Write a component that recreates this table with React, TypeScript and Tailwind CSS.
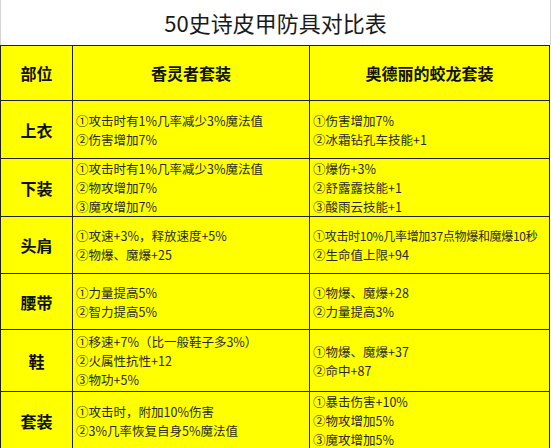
const ROWS = [
  {
    part: "上衣",
    h: "h-[58px]",
    a: ["①攻击时有1%几率减少3%魔法值", "②伤害增加7%"],
    b: ["①伤害增加7%", "②冰霜钻孔车技能+1"],
  },
  {
    part: "下装",
    h: "h-[58px]",
    a: ["①攻击时有1%几率减少3%魔法值", "②物攻增加7%", "③魔攻增加7%"],
    b: ["①爆伤+3%", "②舒露露技能+1", "③酸雨云技能+1"],
  },
  {
    part: "头肩",
    h: "h-[57px]",
    a: ["①攻速+3%，释放速度+5%", "②物爆、魔爆+25"],
    b: ["①攻击时10%几率增加37点物爆和魔爆10秒", "②生命值上限+94"],
  },
  {
    part: "腰带",
    h: "h-[56px]",
    a: ["①力量提高5%", "②智力提高5%"],
    b: ["①物爆、魔爆+28", "②力量提高3%"],
  },
  {
    part: "鞋",
    h: "h-[62px]",
    a: ["①移速+7%（比一般鞋子多3%）", "②火属性抗性+12", "③物功+5%"],
    b: ["①物爆、魔爆+37", "②命中+87"],
  },
  {
    part: "套装",
    h: "h-[58px]",
    a: ["①攻击时，附加10%伤害", "②3%几率恢复自身5%魔法值"],
    b: ["①暴击伤害+10%", "②物攻增加5%", "③魔攻增加5%"],
  },
];

function Lines({ items }: { items: string[] }) {
  return (
    <div className="flex flex-col">
      {items.map((t, i) => (
        <span
          key={i}
          className={
            t.length > 20
              ? "leading-[19px] whitespace-nowrap text-[12px] tracking-[-0.3px]"
              : "leading-[19px] whitespace-nowrap"
          }
        >
          {t}
        </span>
      ))}
    </div>
  );
}

export default function App() {
  return (
    <div className="w-[551px] h-[448px] overflow-hidden bg-white font-['Noto_Sans_CJK_SC','Noto_Sans',sans-serif]">
      <div className="h-[45px] border-x border-[#d4d4d4] flex items-center justify-center text-[22px] text-[#1a1a1a]">
        50史诗皮甲防具对比表
      </div>
      <table className="w-[549px] table-fixed border-collapse bg-[#ffff00] text-[12.5px] text-[#2a2a2a]">
        <colgroup>
          <col className="w-[72px]" />
          <col className="w-[237px]" />
          <col className="w-[240px]" />
        </colgroup>
        <thead>
          <tr className="h-[55px] text-[16px] font-bold text-[#111]">
            <th className="border border-[#222] text-center">部位</th>
            <th className="border border-[#222] text-center">香灵者套装</th>
            <th className="border border-[#222] text-center">奥德丽的蛟龙套装</th>
          </tr>
        </thead>
        <tbody>
          {ROWS.map((r) => (
            <tr key={r.part} className={r.h}>
              <td className="border border-[#222] text-center text-[16px] font-bold text-[#111]">{r.part}</td>
              <td className="border border-[#222] pl-[3px] align-middle">
                <Lines items={r.a} />
              </td>
              <td className="border border-[#222] pl-[3px] align-middle">
                <Lines items={r.b} />
              </td>
            </tr>
          ))}
        </tbody>
      </table>
    </div>
  );
}
